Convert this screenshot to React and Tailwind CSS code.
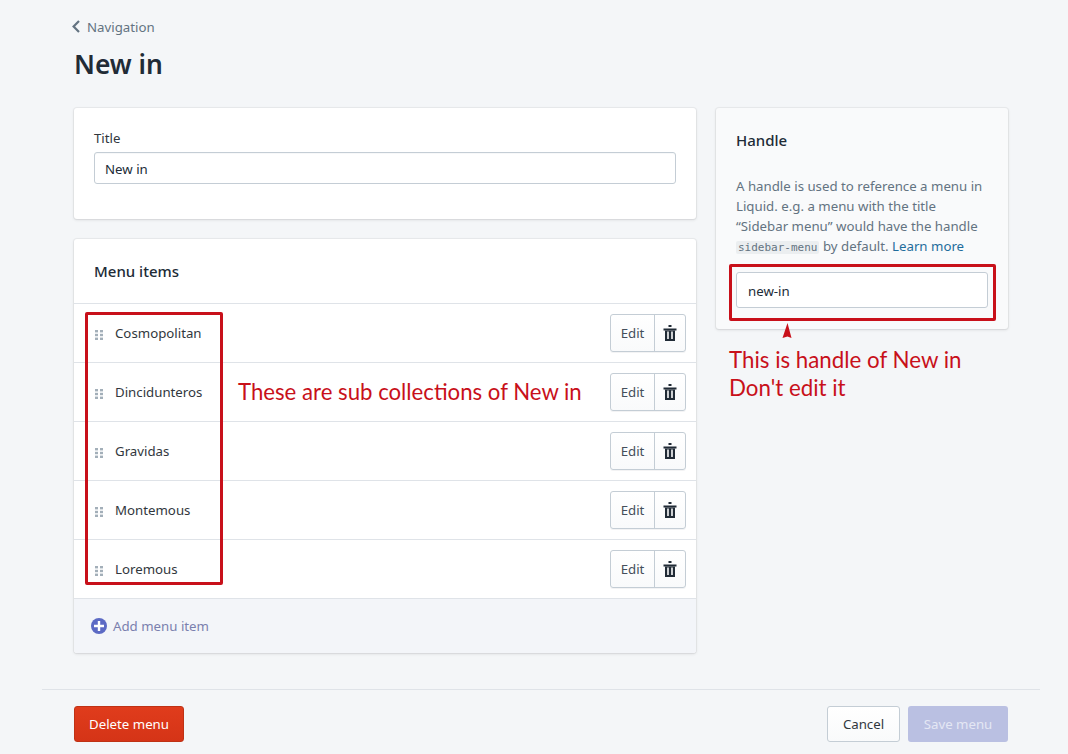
import React from 'react';

const menuItems = ['Cosmopolitan', 'Dincidunteros', 'Gravidas', 'Montemous', 'Loremous'];

const BackChevron = () => (
    <svg width="8" height="13" viewBox="0 0 8 13" fill="none" stroke="#637381" strokeWidth="2.2" className="shrink-0">
        <path d="M7 1 1.6 6.5 7 12" />
    </svg>
);

const DragHandle = () => (
    <svg width="8" height="10" viewBox="0 0 8 10" className="mt-[4px] shrink-0 fill-[#a3afb9]">
        <rect x="0" y="0" width="3" height="2.4" />
        <rect x="5" y="0" width="3" height="2.4" />
        <rect x="0" y="3.8" width="3" height="2.4" />
        <rect x="5" y="3.8" width="3" height="2.4" />
        <rect x="0" y="7.6" width="3" height="2.4" />
        <rect x="5" y="7.6" width="3" height="2.4" />
    </svg>
);

const TrashIcon = () => (
    <svg width="14" height="16" viewBox="0 0 14 16" className="fill-[#212b36]">
        <rect x="5.5" y="0" width="3" height="2" />
        <rect x="0.5" y="3.5" width="13" height="2" />
        <path d="M2 5.5h10V16H2zM4.2 6.5v7.5h1.6V6.5zM8.2 6.5v7.5h1.6V6.5z" fillRule="evenodd" />
    </svg>
);

const PlusCircle = () => (
    <svg width="16" height="16" viewBox="0 0 16 16" className="shrink-0">
        <circle cx="8" cy="8" r="8" fill="#5c6ac4" />
        <path d="M6.8 3h2.4v3.8H13v2.4H9.2V13H6.8V9.2H3V6.8h3.8z" fill="#fff" />
    </svg>
);

const MenuRow = ({ name }) => (
    <div className="flex h-[59px] items-center border-t border-[#dfe3e8] pl-[21px] pr-[10px]">
        <DragHandle />
        <span className="ml-[12px] flex-1 translate-y-[1px] text-[13.25px] text-[#31373d]">{name}</span>
        <div className="flex h-[38px] w-[76px] rounded-[3px] border border-[#c4cdd5] bg-gradient-to-b from-white to-[#f9fafb] shadow-[0_1px_0_rgba(22,29,37,0.05)]">
            <span className="flex w-[44px] items-center justify-center border-r border-[#c4cdd5] pt-[2px] text-[13.25px] text-[#454f5b]">Edit</span>
            <span className="flex flex-1 items-center justify-center"><TrashIcon /></span>
        </div>
    </div>
);

export default function App() {
    return (
        <div className="h-[754px] overflow-hidden bg-[#f4f6f8] font-['Noto_Sans','Open_Sans',sans-serif] text-[13.25px] text-[#212b36]">
            <div className="pl-[74px] pr-[60px]">
                {/* Page header */}
                <div className="flex h-[108px] flex-col">
                    <div className="-ml-[2px] mt-[16px] flex h-[20px] items-center text-[#637381]">
                        <BackChevron />
                        <span className="ml-[7px] translate-y-[2px] text-[13.25px]">Navigation</span>
                    </div>
                    <h1 className="mt-[10px] text-[26.4px] font-semibold leading-[36px] text-[#212b36]">New in</h1>
                </div>

                <div className="flex gap-[20px]">
                    {/* Main column */}
                    <div className="w-[622px]">
                        <div className="h-[111px] rounded-[3px] bg-white px-[20px] pt-[20px] shadow-[0_0_0_1px_rgba(63,63,68,0.05),0_1px_3px_0_rgba(63,63,68,0.15)]">
                            <div className="h-[24px] text-[13.25px] leading-[20px] text-[#31373d]">Title</div>
                            <div className="flex h-[32px] items-center rounded-[3px] border border-[#c4cdd5] px-[10px] pt-[4px] text-[13.25px] shadow-[inset_0_1px_0_rgba(99,115,129,0.05)]">New in</div>
                        </div>

                        <div className="mt-[20px] rounded-[3px] bg-white shadow-[0_0_0_1px_rgba(63,63,68,0.05),0_1px_3px_0_rgba(63,63,68,0.15)]">
                            <div className="flex h-[64px] items-center px-[20px] text-[15px] font-medium">Menu items</div>
                            <div className="relative">
                                {menuItems.map((item) => <MenuRow key={item} name={item} />)}
                                {/* Red annotations drawn on top of the list */}
                                <div className="absolute left-[11px] top-[9px] h-[273px] w-[138px] rounded-[2px] border-[3px] border-[#c8101a]" />
                                <div className="absolute left-[164px] top-[73px] font-['Lato',sans-serif] text-[22.2px] leading-[32px] text-[#c8101a]">These are sub collections of New in</div>
                            </div>
                            <div className="flex h-[55px] items-center gap-[6px] rounded-b-[3px] border-t border-[#dfe3e8] bg-[#f3f5f9] pl-[17px] text-[#7a80ae]">
                                <PlusCircle />
                                <span className="translate-y-[1px] text-[13.25px]">Add menu item</span>
                            </div>
                        </div>
                    </div>

                    {/* Side column */}
                    <div className="w-[292px]">
                        <div className="relative h-[221px] rounded-[3px] bg-[#f9fafb] px-[20px] pt-[20px] shadow-[0_0_0_1px_rgba(63,63,68,0.05),0_1px_3px_0_rgba(63,63,68,0.15)]">
                            <div className="h-[24px] text-[15px] font-medium leading-[24px]">Handle</div>
                            <p className="mt-[24px] whitespace-nowrap text-[13.25px] leading-[20px] text-[#637381]">
                                A handle is used to reference a menu in<br />
                                Liquid. e.g. a menu with the title<br />
                                “Sidebar menu” would have the handle<br />
                                <code className="rounded-[2px] bg-[#ebeef0] px-[2px] font-['DejaVu_Sans_Mono',monospace] text-[11px]">sidebar-menu</code>{' '}
                                by default. <span className="text-[#1f6d9c]">Learn more</span>
                            </p>
                            <div className="mt-[14px] flex h-[36px] items-center rounded-[3px] border border-[#c4cdd5] bg-white px-[11px] pt-[4px] text-[13.25px]">new-in</div>
                            <div className="absolute left-[13px] top-[156px] h-[57px] w-[267px] rounded-[2px] border-[3px] border-[#c8101a]" />
                        </div>
                        <svg width="10" height="16" viewBox="0 0 10 16" className="relative ml-[66px] -mt-[6px] block fill-[#c8101a]">
                            <path d="M5.5 0 9.5 15 5.5 13.5 .5 15z" />
                        </svg>
                        <div className="ml-[13px] mt-[7px] font-['Lato',sans-serif] text-[22.3px] leading-[28px] text-[#c8101a]">
                            <div>This is handle of New in</div>
                            <div>Don't edit it</div>
                        </div>
                    </div>
                </div>
            </div>

            {/* Footer actions */}
            <div className="ml-[42px] mr-[28px] mt-[36px] flex justify-between border-t border-[#dfe3e8] pl-[32px] pr-[32px] pt-[16px]">
                <div className="flex h-[36px] w-[110px] items-center justify-center rounded-[3px] border border-[#bf3215] bg-gradient-to-b from-[#e03c1c] to-[#d53417] pt-[2px] text-[13.25px] text-white">Delete menu</div>
                <div className="flex gap-[8px]">
                    <div className="flex h-[36px] w-[73px] items-center justify-center rounded-[3px] border border-[#c4cdd5] bg-gradient-to-b from-white to-[#f9fafb] pt-[2px] text-[13.25px] text-[#31373d]">Cancel</div>
                    <div className="flex h-[36px] w-[100px] items-center justify-center rounded-[3px] bg-[#bac0e2] pt-[2px] text-[13.25px] text-[#e4e7f4]">Save menu</div>
                </div>
            </div>
        </div>
    );
}
